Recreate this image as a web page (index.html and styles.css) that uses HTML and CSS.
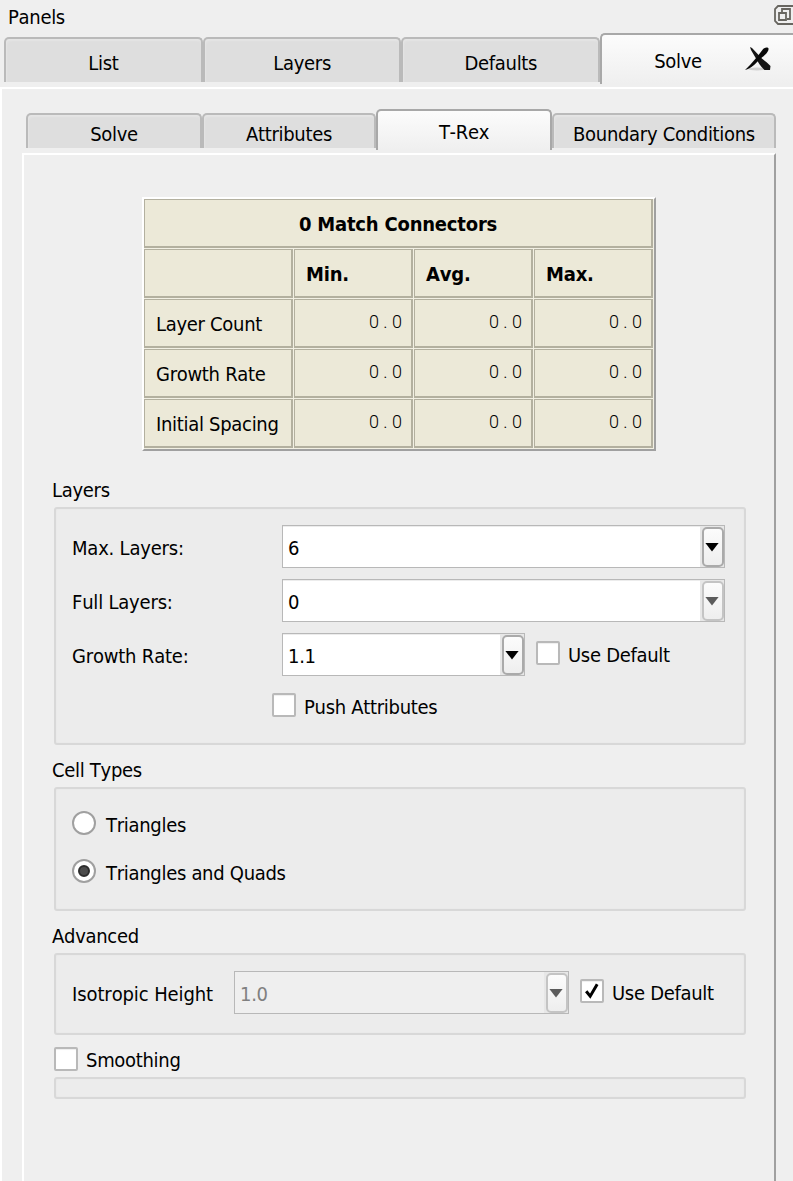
FILE: index.html
```html
<!DOCTYPE html>
<html lang="en">
<head>
<meta charset="utf-8">
<title>Panels</title>
<link rel="stylesheet" href="styles.css">
</head>
<body>
<header class="titlebar">
  <span class="title">Panels</span>
  <svg class="float-icon" width="19" height="20" viewBox="0 0 19 20" fill="none" stroke="#686660" stroke-width="1.8"><path d="M19 1H4L1 4V16L4 19H19"/><path d="M8 7V4H16V14H13"/><path d="M5 8H12V15H5Z"/></svg>
</header>
<nav class="tabs outer">
  <div class="tab"><span>List</span></div>
  <div class="tab"><span>Layers</span></div>
  <div class="tab"><span>Defaults</span></div>
  <div class="tab active"><span>Solve</span>
    <svg class="close" width="26" height="25" viewBox="0 0 26 25"><ellipse cx="12" cy="22" rx="9" ry="1.4" fill="#cfcfcf"/><path d="M5 0L7 1L15 9.5C18 13 23 16 25.5 19L25 23H19.500C16 20 13 15 11 11.500L6 3Z" fill="#151515"/><path d="M17 3.500C19 0 23 0 23.500 1.500C24 5 19 9 14 13C10 17 7 21 0 23L5 18L12 10Z" fill="#090909"/></svg>
  </div>
</nav>
<main class="page">
  <nav class="tabs inner">
    <div class="tab"><span>Solve</span></div>
    <div class="tab"><span>Attributes</span></div>
    <div class="tab active"><span>T-Rex</span></div>
    <div class="tab"><span>Boundary Conditions</span></div>
  </nav>
  <section class="sheet">
    <div class="stats">
      <div class="cell head wide">0 Match Connectors</div>
      <div class="cell"></div><div class="cell head">Min.</div><div class="cell head">Avg.</div><div class="cell head">Max.</div>
      <div class="cell">Layer Count</div><div class="cell num">0.0</div><div class="cell num">0.0</div><div class="cell num">0.0</div>
      <div class="cell">Growth Rate</div><div class="cell num">0.0</div><div class="cell num">0.0</div><div class="cell num">0.0</div>
      <div class="cell">Initial Spacing</div><div class="cell num">0.0</div><div class="cell num">0.0</div><div class="cell num">0.0</div>
    </div>

    <h2 class="caption">Layers</h2>
    <div class="group layers">
      <div class="row"><span class="label">Max. Layers:</span>
        <div class="combo"><span class="value">6</span><span class="drop"><i class="arrow"></i></span></div></div>
      <div class="row"><span class="label">Full Layers:</span>
        <div class="combo dim"><span class="value">0</span><span class="drop"><i class="arrow"></i></span></div></div>
      <div class="row"><span class="label">Growth Rate:</span>
        <div class="combo short"><span class="value">1.1</span><span class="drop"><i class="arrow"></i></span></div>
        <label class="check"><i class="box"></i><span>Use Default</span></label></div>
      <label class="check push"><i class="box"></i><span>Push Attributes</span></label>
    </div>

    <h2 class="caption">Cell Types</h2>
    <div class="group cells">
      <label class="check"><i class="radio"></i><span>Triangles</span></label>
      <label class="check"><i class="radio on"></i><span>Triangles and Quads</span></label>
    </div>

    <h2 class="caption">Advanced</h2>
    <div class="group advanced">
      <div class="row"><span class="label">Isotropic Height</span>
        <div class="combo dim off"><span class="value">1.0</span><span class="drop"><i class="arrow"></i></span></div>
        <label class="check"><i class="box"><svg width="14" height="16" viewBox="0 0 14 16" fill="none" stroke="#000" stroke-width="3"><path d="M1.2 8.200L5.200 13.200L12.200 1.200"/></svg></i><span>Use Default</span></label></div>
    </div>
    <label class="check smoothing"><i class="box"></i><span>Smoothing</span></label>
    <div class="group empty"></div>
  </section>
</main>
</body>
</html>
```
FILE: styles.css
```css
*, *::before, *::after { box-sizing: border-box; }
body {
  margin: 0;
  width: 793px;
  height: 1181px;
  overflow: hidden;
  display: flex;
  flex-direction: column;
  background: #efefef;
  color: #000;
  font: 20px/24px "DejaVu Sans Condensed", "DejaVu Sans", sans-serif;
  font-stretch: condensed;
  font-kerning: none;
  letter-spacing: -0.3px;
  white-space: nowrap;
}
.titlebar {
  display: flex;
  justify-content: space-between;
  height: 33px;
  padding: 5px 0 0 8px;
}
.tabs { display: flex; align-items: flex-start; }
.tab {
  display: flex;
  justify-content: center;
  border: 2px solid #bababa;
  border-bottom: 0;
  border-radius: 5px 5px 0 0;
  background: #dedede;
  box-shadow: inset 1px 2px 2px #e5e5e5;
}
.tab.active {
  border-color: #a8a8a8;
  background: linear-gradient(#fcfcfc, #efefef);
  box-shadow: none;
}
.outer { height: 54px; padding-left: 4px; }
.outer .tab { width: 199px; height: 45px; margin-top: 4px; padding-top: 12px; }
.outer .tab.active {
  width: 194px;
  height: 51px;
  margin: 0 -1px 0 0;
  padding: 14px 0 0 52px;
  justify-content: flex-start;
  border-right: 0;
  border-top-right-radius: 0;
}
.close { margin: -2px 0 0 43px; }
.page {
  flex: 1;
  border: solid #fff;
  border-width: 2px 0 0 2px;
  padding: 20px 17px 0 20px;
  display: flex;
  flex-direction: column;
}
.inner { height: 44px; padding-left: 4px; }
.inner .tab { height: 35px; margin-top: 4px; padding-top: 7px; width: 176px; }
.inner .tab:nth-child(2) { width: 174px; }
.inner .tab:last-child { width: 224px; }
.inner .tab.active { height: 41px; margin-top: 0; padding-top: 9px; }
.sheet {
  flex: 1;
  border: solid #fff;
  border-width: 2px 2px 0 2px;
  border-right-color: #a0a0a0;
  padding: 42px 28px 0 30px;
}
.stats {
  width: 514px;
  margin-left: 88px;
  display: grid;
  grid-template-columns: 149px 119px 119px 119px;
  grid-auto-rows: 49px;
  gap: 1px;
  padding: 0 1px 1px 0;
  border: 2px solid #fff;
  border-right-color: #a0a0a0;
  border-bottom-color: #a0a0a0;
  background: #f2f0e3;
}
.cell {
  border: solid #b3b09f;
  border-width: 1px 2px 2px 1px;
  background: #ece9d8;
  padding: 12px 11px 0;
}
.head { font-weight: bold; letter-spacing: -0.2px; }
.wide { grid-column: 1 / -1; text-align: center; }
.num {
  font: 300 18px/24px Roboto, sans-serif;
  font-stretch: normal;
  letter-spacing: 4.4px;
  text-align: right;
  padding: 10px 4.6px 0 0;
}
.caption { margin: 27px 0 5px -2px; font-size: 20px; font-weight: normal; }
.group {
  width: 692px;
  border: 2px solid #d8d8d8;
  border-radius: 3px;
  background: #ececec;
  box-shadow: inset 0 0 2px #e2e2e2;
}
.layers { height: 238px; padding: 16px 0 0 16px; }
.group + .caption { margin-top: 13px; }
.row { display: flex; align-items: flex-start; }
.layers .row { height: 54px; }
.label { width: 210px; padding-top: 11px; letter-spacing: -0.2px; }
.combo {
  width: 443px;
  height: 43px;
  display: flex;
  border: 1px solid #b8b8b8;
  background: #fff;
  box-shadow: inset 0 1px #ececec;
}
.short { width: 243px; }
.value { flex: 1; padding: 10px 0 0 5px; }
.drop {
  display: flex;
  width: 24px;
  padding: 1px 0 0 2px;
  background: #e7e7e7;
}
.arrow {
  width: 22px;
  height: 40px;
  border: 2px solid #aaa;
  border-radius: 5px;
  background: linear-gradient(#fcfcfc, #eee);
  display: grid;
  place-items: center;
}
.arrow::after {
  content: "";
  width: 14px;
  height: 9px;
  margin-left: -2px;
  background: #000;
  clip-path: polygon(0 0, 100% 0, 50% 100%);
}
.dim .arrow { border-color: #c4c4c4; }
.dim .arrow::after { background: #5c5c5c; }
.check { display: flex; align-items: flex-start; }
.check span { padding: 2px 0 0 8px; }
.row .check { margin: 8px 0 0 11px; }
.box, .radio {
  width: 24px;
  height: 24px;
  display: grid;
  place-items: center;
  border: 2px solid #b9b9b9;
  border-radius: 2px;
  background: #fff;
  box-shadow: inset 0 1px 1px #eee;
}
.push { margin: 6px 0 0 200px; }
.cells { height: 124px; padding: 22px 0 0 16px; }
.cells .check { height: 48px; }
.cells .check span { padding: 2px 0 0 10px; }
.radio { border-color: #a0a0a0; border-radius: 50%; box-shadow: none; }
.radio.on::after {
  content: "";
  width: 12px;
  height: 12px;
  border: 2px solid #2d2d2d;
  border-radius: 50%;
  background: #4c4c4c;
}
.advanced { height: 82px; padding: 16px 0 0 16px; }
.advanced .label { width: 162px; letter-spacing: -0.1px; }
.off { width: 335px; background: #efefef; color: #808080; box-shadow: none; }
.smoothing { margin-top: 12px; height: 30px; }
.smoothing span { padding-top: 1px; }
.empty { height: 22px; }
```
